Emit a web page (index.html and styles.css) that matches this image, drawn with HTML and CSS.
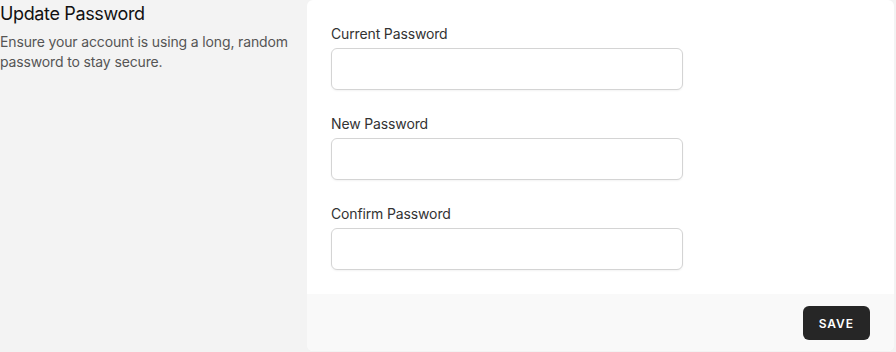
FILE: index.html
```
<!DOCTYPE html>
<html lang="en">
<head>
    <meta charset="UTF-8">
    <meta name="viewport" content="width=device-width, initial-scale=1.0">
    <title>Update Password</title>
    <link rel="stylesheet" href="styles.css">
</head>
<body>
    <div class="section">
        <div class="section-info">
            <h3 class="section-title">Update Password</h3>
            <p class="section-desc">Ensure your account is using a long, random password to stay secure.</p>
        </div>

        <form class="card">
            <div class="card-body">
                <div class="field">
                    <label class="field-label" for="current_password">Current Password</label>
                    <input class="field-input" id="current_password" type="password">
                </div>
                <div class="field">
                    <label class="field-label" for="password">New Password</label>
                    <input class="field-input" id="password" type="password">
                </div>
                <div class="field">
                    <label class="field-label" for="password_confirmation">Confirm Password</label>
                    <input class="field-input" id="password_confirmation" type="password">
                </div>
            </div>
            <div class="card-footer">
                <button type="button" class="btn-save">Save</button>
            </div>
        </form>
    </div>
</body>
</html>
```

FILE: styles.css
```
body {
    margin: 0;
    padding: 0;
    font-family: Inter, "Noto Sans", sans-serif;
    background-color: #f3f3f3;
    color: #1f1f1f;
}

.section {
    display: grid;
    grid-template-columns: 307px 1fr;
    height: 352px;
    padding-right: 2px;
}

.section-info {
    padding-right: 4px;
}

.section-title {
    margin: 0;
    font-size: 18px;
    line-height: 28px;
    font-weight: 400;
    letter-spacing: -0.02em;
    color: #111;
}

.section-desc {
    margin: 4px 0 0;
    font-size: 14px;
    line-height: 20px;
    letter-spacing: -0.01em;
    color: #555;
}

.card {
    display: flex;
    flex-direction: column;
    background-color: #fff;
    border-radius: 6px;
    height: 351px;
    overflow: hidden;
}

.card-body {
    padding: 24px 24px 0;
    flex: 1;
}

.field {
    width: 352px;
    margin-bottom: 24px;
}

.field-label {
    display: block;
    font-size: 14px;
    line-height: 20px;
    letter-spacing: -0.01em;
    color: #333;
    margin-bottom: 4px;
}

.field-input {
    display: block;
    box-sizing: border-box;
    width: 100%;
    height: 42px;
    border: 1px solid #d4d4d4;
    border-radius: 6px;
    box-shadow: 0 1px 2px rgba(0, 0, 0, 0.05);
    background: #fff;
}

.card-footer {
    display: flex;
    justify-content: flex-end;
    align-items: center;
    background-color: #f9f9f9;
    padding: 12px 24px 11px;
}

.btn-save {
    height: 34px;
    padding: 0 16px;
    background-color: #262626;
    color: #fff;
    border: 0;
    border-radius: 6px;
    font-family: inherit;
    font-size: 12px;
    font-weight: 600;
    letter-spacing: 0.08em;
    text-transform: uppercase;
}
```
